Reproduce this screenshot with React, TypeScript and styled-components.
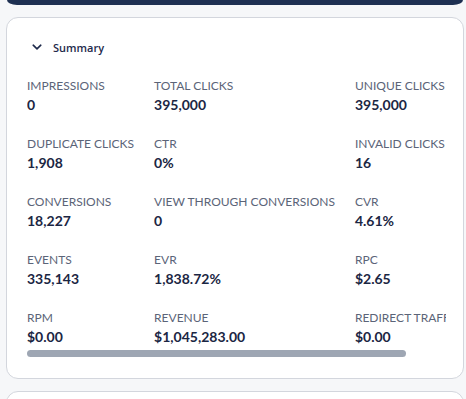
import React from "react";
import styled, { createGlobalStyle } from "styled-components";

const GlobalStyle = createGlobalStyle`
  html, body { margin: 0; padding: 0; background: #f6f7f9; }
  body { font-family: "Lato", "Liberation Sans", sans-serif; overflow: hidden; }
`;

const Page = styled.div`
  display: flex;
  flex-direction: column;
  gap: 12px;
  padding: 0 2px 0 6px;
`;

const TopBar = styled.div`
  height: 5px;
  margin: 0 1px;
  background: #1e3052;
  border-radius: 0 0 10px 10px / 0 0 5px 5px;
`;

const Card = styled.section`
  background: #ffffff;
  border: 1px solid #d3d6dd;
  border-radius: 12px;
  padding: 19px 17px 21px 20px;
  display: flex;
  flex-direction: column;
  gap: 20px;
`;

const EmptyCard = styled(Card)`
  height: 80px;
`;

const Header = styled.button`
  display: flex;
  align-items: center;
  gap: 11px;
  padding: 0 0 0 5px;
  height: 20px;
  border: none;
  background: transparent;
  color: #1e2a4b;
  font-family: "Open Sans", "Liberation Sans", sans-serif;
  font-size: 11px;
  font-weight: 600;
  cursor: pointer;
`;

const ScrollArea = styled.div`
  overflow: hidden;
  display: flex;
  flex-direction: column;
  gap: 3px;
`;

const Grid = styled.div`
  display: grid;
  grid-template-columns: repeat(3, max-content);
  column-gap: 20px;
  row-gap: 20px;
`;

const Metric = styled.div`
  display: flex;
  flex-direction: column;
  white-space: nowrap;
`;

const Label = styled.span`
  font-size: 12px;
  line-height: 18px;
  color: #5b6478;
  text-transform: uppercase;
`;

const Value = styled.span`
  font-size: 14px;
  line-height: 20px;
  font-weight: 700;
  color: #1b2643;
`;

const Track = styled.div`
  height: 7px;
`;

const Thumb = styled.div<{ $size: number }>`
  height: 7px;
  width: ${(p) => p.$size}%;
  background: #9ea6b3;
  border-radius: 4px;
`;

const metrics: [string, string][] = [
  ["Impressions", "0"],
  ["Total Clicks", "395,000"],
  ["Unique Clicks", "395,000"],
  ["Duplicate Clicks", "1,908"],
  ["CTR", "0%"],
  ["Invalid Clicks", "16"],
  ["Conversions", "18,227"],
  ["View Through Conversions", "0"],
  ["CVR", "4.61%"],
  ["Events", "335,143"],
  ["EVR", "1,838.72%"],
  ["RPC", "$2.65"],
  ["RPM", "$0.00"],
  ["Revenue", "$1,045,283.00"],
  ["Redirect Traffic Revenue", "$0.00"],
];

const Chevron = () => (
  <svg width="10" height="6" viewBox="0 0 10 6" fill="none">
    <path d="M1.2 1.2 L5 4.8 L8.8 1.2" stroke="#1e2a4b" strokeWidth="1.6" strokeLinecap="round" strokeLinejoin="round" />
  </svg>
);

export default function App() {
  return (
    <>
      <GlobalStyle />
      <Page>
        <TopBar />
        <Card>
          <Header>
            <Chevron />
            <span>Summary</span>
          </Header>
          <ScrollArea>
            <Grid>
              {metrics.map(([label, value]) => (
                <Metric key={label}>
                  <Label>{label}</Label>
                  <Value>{value}</Value>
                </Metric>
              ))}
            </Grid>
            <Track>
              <Thumb $size={90.4} />
            </Track>
          </ScrollArea>
        </Card>
        <EmptyCard />
      </Page>
    </>
  );
}
